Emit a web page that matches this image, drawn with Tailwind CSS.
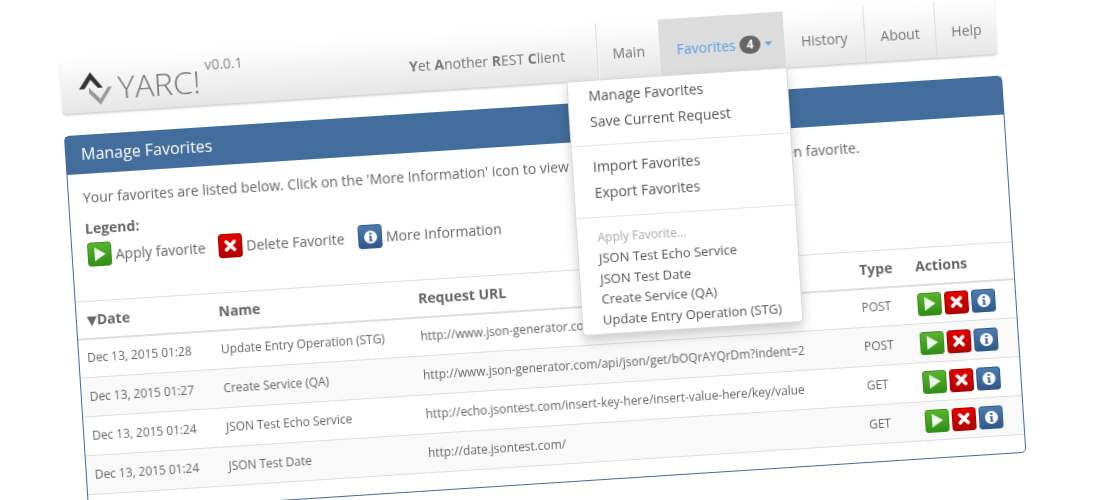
<!DOCTYPE html>
<html lang="en">

<head>
    <meta charset="UTF-8">
    <title>YARC!</title>
    <script src="https://cdn.jsdelivr.net/npm/@tailwindcss/browser@4"></script>
</head>

<body class="h-[500px] overflow-hidden bg-white font-['Open_Sans',sans-serif] text-[14px] text-[#666]">
    <!-- whole app is tilted, everything inside is normal flow -->
    <div class="w-[1100px] origin-top-left rotate-[-3.7deg] pl-[55px] pt-[61.5px] blur-[0.3px]">

        <nav class="flex h-[57.5px] w-[937px] rounded-b-[4px] border-b border-[#d4d4d4] bg-linear-to-b from-white to-[#e6e6e6] shadow-[0_1px_2px_rgba(0,0,0,.15)]">
            <div class="flex w-[349px] pl-[18px] pt-[16px]">
                <svg width="34" height="33" viewBox="0 0 34 33" class="shrink-0">
                    <path d="M0 16.5 L12 0 L24 16 L19 16 L12 7.5 L5.5 16.5 Z" fill="#333"></path>
                    <path d="M10 15.5 L21 27 L29 15.5 L33 15.5 L21 33 L10 21 Z" fill="#999"></path>
                </svg>
                <span class="ml-[5px] -mt-[4px] text-[32px] leading-[40px] font-light text-[#777]">YARC!</span>
                <span class="ml-[5px] -mt-[10px] text-[14px] leading-[20px] text-[#888]">v0.0.1</span>
            </div>
            <div class="w-[188px] whitespace-nowrap pt-[21px] leading-[20px] text-[#777]"><b>Y</b>et <b>A</b>nother <b>R</b>EST <b>C</b>lient</div>
            <ul class="flex">
                <li class="w-[63px] border-l border-[#dcdcdc] pt-[21px] text-center leading-[20px] text-[#777] shadow-[inset_1px_0_0_#f8f8f8]">Main</li>
                <li class="relative flex w-[125px] items-start bg-[#dcdcdc] pl-[17px] pt-[21px] leading-[20px] text-[#5c9ee8]">
                    Favorites
                    <span class="ml-[4px] mt-[1px] h-[18px] w-[21px] rounded-[9px] bg-[#666] text-center text-[12px] leading-[18px] font-bold text-white">4</span>
                    <span class="ml-[4px] mt-[8px] border-x-[4px] border-t-[4px] border-x-transparent border-t-[#5c9ee8]"></span>
                    <!-- open dropdown -->
                    <div class="absolute right-[-1px] top-[56px] z-10 h-[255px] w-[221px] rounded-b-[4px] border border-black/15 bg-white shadow-[0_6px_12px_rgba(0,0,0,.2)]">
                        <div class="px-[20px] pt-[5px] text-[#555]">
                            <p class="h-[26px] leading-[20px]">Manage Favorites</p>
                            <p class="h-[20px] leading-[20px]">Save Current Request</p>
                        </div>
                        <div class="mt-[13px] border-t border-[#e5e5e5]"></div>
                        <div class="px-[20px] pt-[11px] text-[#555]">
                            <p class="h-[26px] leading-[20px]">Import Favorites</p>
                            <p class="h-[20px] leading-[20px]">Export Favorites</p>
                        </div>
                        <div class="mt-[14px] border-t border-[#e5e5e5]"></div>
                        <div class="px-[20px] pt-[10px] text-[13px] text-[#555]">
                            <p class="h-[20px] text-[12px] leading-[20px] text-[#aaa]">Apply Favorite...</p>
                            <p class="h-[21px] leading-[20px]">JSON Test Echo Service</p>
                            <p class="h-[20px] leading-[20px]">JSON Test Date</p>
                            <p class="h-[21px] leading-[20px]">Create Service (QA)</p>
                            <p class="h-[20px] whitespace-nowrap leading-[20px]">Update Entry Operation (STG)</p>
                        </div>
                    </div>
                </li>
                <li class="w-[81px] border-r border-[#dcdcdc] pt-[21px] text-center leading-[20px] text-[#777]">History</li>
                <li class="w-[71px] border-r border-[#dcdcdc] pt-[21px] text-center leading-[20px] text-[#777]">About</li>
                <li class="w-[60px] pl-[1px] pt-[21px] text-center leading-[20px] text-[#777]">Help</li>
            </ul>
        </nav>

        <section class="mt-[21px] h-[378px] w-[940px] rounded-[5px] border border-[#3f6c9b] bg-white">
            <h1 class="flex h-[38px] items-center bg-[#436d9c] px-[15px] pb-[2px] text-[16px] text-white">Manage Favorites</h1>
            <div class="px-[14px] pt-[14px]">
                <p class="whitespace-nowrap leading-[20px]">Your favorites are listed below. Click on the 'More Information' icon to view additional information on the given favorite.</p>
                <p class="mt-[11px] font-bold leading-[20px]">Legend:</p>
                <div class="mt-[4px] flex h-[24px] items-center pl-[1px]">
                    <span class="flex h-[24px] w-[24px] items-center justify-center rounded-[3px] border border-[#3d8f1e] bg-linear-to-b from-[#58b52e] to-[#2f8e14]">
                        <svg width="12" height="14" viewBox="0 0 12 14"><path d="M1 0 L12 7 L1 14 Z" fill="#fff" fill-opacity=".9"></path></svg>
                    </span>
                    <span class="ml-[4px] w-[103px]">Apply favorite</span>
                    <span class="flex h-[24px] w-[24px] items-center justify-center rounded-[3px] border border-[#a80000] bg-linear-to-b from-[#e60000] to-[#b00000]">
                        <svg width="12" height="12" viewBox="0 0 12 12"><path d="M2 2 L10 10 M10 2 L2 10" stroke="#fff" stroke-width="3.4" stroke-linecap="round"></path></svg>
                    </span>
                    <span class="ml-[4px] w-[112px]">Delete Favorite</span>
                    <span class="flex h-[24px] w-[24px] items-center justify-center rounded-[3px] border border-[#2f5a8a] bg-linear-to-b from-[#4f7cae] to-[#30598a]">
                        <svg width="13" height="13" viewBox="0 0 13 13"><circle cx="6.5" cy="6.5" r="6.5" fill="#fff"></circle><rect x="5.4" y="2" width="2.2" height="2" fill="#3c679a"></rect><path d="M4.8 5.3 H7.6 V9.6 H8.4 V10.8 H4.8 V9.6 H5.5 V6.5 H4.8 Z" fill="#3c679a"></path></svg>
                    </span>
                    <span class="ml-[4px]">More Information</span>
                </div>
            </div>

            <table class="mt-[34px] w-full table-fixed text-[11.9px]">
                <thead class="text-[14px] font-bold">
                    <tr class="h-[37px] border-t border-b-2 border-[#dddddd]">
                        <th class="w-[134px] pl-[10px] text-left"><span class="font-['DejaVu_Sans'] text-[13px]">▼</span>Date</th>
                        <th class="w-[200px] pl-[8px] text-left">Name</th>
                        <th class="w-[442px] pl-[8px] text-left">Request URL</th>
                        <th class="w-[56px] pl-[8px] text-left">Type</th>
                        <th class="pl-[8px] text-left">Actions</th>
                    </tr>
                </thead>
                <tbody>
                    <tr class="h-[39px] border-b border-[#dddddd]">
                        <td class="pl-[8px]">Dec 13, 2015 01:28</td>
                        <td class="pl-[8px]">Update Entry Operation (STG)</td>
                        <td class="pl-[8px]">http://www.json-generator.com/api/json/get/cfQgLOoPxK?indent=2</td>
                        <td class="pl-[8px]">POST</td>
                        <td class="pl-[8px]">
                            <div class="flex gap-[3px]">
                                <span class="flex h-[23px] w-[24px] items-center justify-center rounded-[3px] border border-[#3d8f1e] bg-linear-to-b from-[#58b52e] to-[#2f8e14]"><svg width="12" height="14" viewBox="0 0 12 14"><path d="M1 0 L12 7 L1 14 Z" fill="#fff" fill-opacity=".9"></path></svg></span>
                                <span class="flex h-[23px] w-[24px] items-center justify-center rounded-[3px] border border-[#a80000] bg-linear-to-b from-[#e60000] to-[#b00000]"><svg width="12" height="12" viewBox="0 0 12 12"><path d="M2 2 L10 10 M10 2 L2 10" stroke="#fff" stroke-width="3.4" stroke-linecap="round"></path></svg></span>
                                <span class="flex h-[23px] w-[24px] items-center justify-center rounded-[3px] border border-[#2f5a8a] bg-linear-to-b from-[#4f7cae] to-[#30598a]"><svg width="13" height="13" viewBox="0 0 13 13"><circle cx="6.5" cy="6.5" r="6.5" fill="#fff"></circle><rect x="5.4" y="2" width="2.2" height="2" fill="#3c679a"></rect><path d="M4.8 5.3 H7.6 V9.6 H8.4 V10.8 H4.8 V9.6 H5.5 V6.5 H4.8 Z" fill="#3c679a"></path></svg></span>
                            </div>
                        </td>
                    </tr>
                    <tr class="h-[39px] border-b border-[#dddddd] bg-[#f9f9f9]">
                        <td class="pl-[8px]">Dec 13, 2015 01:27</td>
                        <td class="pl-[8px]">Create Service (QA)</td>
                        <td class="pl-[8px]">http://www.json-generator.com/api/json/get/bOQrAYQrDm?indent=2</td>
                        <td class="pl-[8px]">POST</td>
                        <td class="pl-[8px]">
                            <div class="flex gap-[3px]">
                                <span class="flex h-[23px] w-[24px] items-center justify-center rounded-[3px] border border-[#3d8f1e] bg-linear-to-b from-[#58b52e] to-[#2f8e14]"><svg width="12" height="14" viewBox="0 0 12 14"><path d="M1 0 L12 7 L1 14 Z" fill="#fff" fill-opacity=".9"></path></svg></span>
                                <span class="flex h-[23px] w-[24px] items-center justify-center rounded-[3px] border border-[#a80000] bg-linear-to-b from-[#e60000] to-[#b00000]"><svg width="12" height="12" viewBox="0 0 12 12"><path d="M2 2 L10 10 M10 2 L2 10" stroke="#fff" stroke-width="3.4" stroke-linecap="round"></path></svg></span>
                                <span class="flex h-[23px] w-[24px] items-center justify-center rounded-[3px] border border-[#2f5a8a] bg-linear-to-b from-[#4f7cae] to-[#30598a]"><svg width="13" height="13" viewBox="0 0 13 13"><circle cx="6.5" cy="6.5" r="6.5" fill="#fff"></circle><rect x="5.4" y="2" width="2.2" height="2" fill="#3c679a"></rect><path d="M4.8 5.3 H7.6 V9.6 H8.4 V10.8 H4.8 V9.6 H5.5 V6.5 H4.8 Z" fill="#3c679a"></path></svg></span>
                            </div>
                        </td>
                    </tr>
                    <tr class="h-[39px] border-b border-[#dddddd]">
                        <td class="pl-[8px]">Dec 13, 2015 01:24</td>
                        <td class="pl-[8px]">JSON Test Echo Service</td>
                        <td class="pl-[8px]">http://echo.jsontest.com/insert-key-here/insert-value-here/key/value</td>
                        <td class="pl-[8px]">GET</td>
                        <td class="pl-[8px]">
                            <div class="flex gap-[3px]">
                                <span class="flex h-[23px] w-[24px] items-center justify-center rounded-[3px] border border-[#3d8f1e] bg-linear-to-b from-[#58b52e] to-[#2f8e14]"><svg width="12" height="14" viewBox="0 0 12 14"><path d="M1 0 L12 7 L1 14 Z" fill="#fff" fill-opacity=".9"></path></svg></span>
                                <span class="flex h-[23px] w-[24px] items-center justify-center rounded-[3px] border border-[#a80000] bg-linear-to-b from-[#e60000] to-[#b00000]"><svg width="12" height="12" viewBox="0 0 12 12"><path d="M2 2 L10 10 M10 2 L2 10" stroke="#fff" stroke-width="3.4" stroke-linecap="round"></path></svg></span>
                                <span class="flex h-[23px] w-[24px] items-center justify-center rounded-[3px] border border-[#2f5a8a] bg-linear-to-b from-[#4f7cae] to-[#30598a]"><svg width="13" height="13" viewBox="0 0 13 13"><circle cx="6.5" cy="6.5" r="6.5" fill="#fff"></circle><rect x="5.4" y="2" width="2.2" height="2" fill="#3c679a"></rect><path d="M4.8 5.3 H7.6 V9.6 H8.4 V10.8 H4.8 V9.6 H5.5 V6.5 H4.8 Z" fill="#3c679a"></path></svg></span>
                            </div>
                        </td>
                    </tr>
                    <tr class="h-[39px] border-b border-[#dddddd] bg-[#f9f9f9]">
                        <td class="pl-[8px]">Dec 13, 2015 01:24</td>
                        <td class="pl-[8px]">JSON Test Date</td>
                        <td class="pl-[8px]">http://date.jsontest.com/</td>
                        <td class="pl-[8px]">GET</td>
                        <td class="pl-[8px]">
                            <div class="flex gap-[3px]">
                                <span class="flex h-[23px] w-[24px] items-center justify-center rounded-[3px] border border-[#3d8f1e] bg-linear-to-b from-[#58b52e] to-[#2f8e14]"><svg width="12" height="14" viewBox="0 0 12 14"><path d="M1 0 L12 7 L1 14 Z" fill="#fff" fill-opacity=".9"></path></svg></span>
                                <span class="flex h-[23px] w-[24px] items-center justify-center rounded-[3px] border border-[#a80000] bg-linear-to-b from-[#e60000] to-[#b00000]"><svg width="12" height="12" viewBox="0 0 12 12"><path d="M2 2 L10 10 M10 2 L2 10" stroke="#fff" stroke-width="3.4" stroke-linecap="round"></path></svg></span>
                                <span class="flex h-[23px] w-[24px] items-center justify-center rounded-[3px] border border-[#2f5a8a] bg-linear-to-b from-[#4f7cae] to-[#30598a]"><svg width="13" height="13" viewBox="0 0 13 13"><circle cx="6.5" cy="6.5" r="6.5" fill="#fff"></circle><rect x="5.4" y="2" width="2.2" height="2" fill="#3c679a"></rect><path d="M4.8 5.3 H7.6 V9.6 H8.4 V10.8 H4.8 V9.6 H5.5 V6.5 H4.8 Z" fill="#3c679a"></path></svg></span>
                            </div>
                        </td>
                    </tr>
                </tbody>
            </table>
        </section>
    </div>
</body>

</html>
